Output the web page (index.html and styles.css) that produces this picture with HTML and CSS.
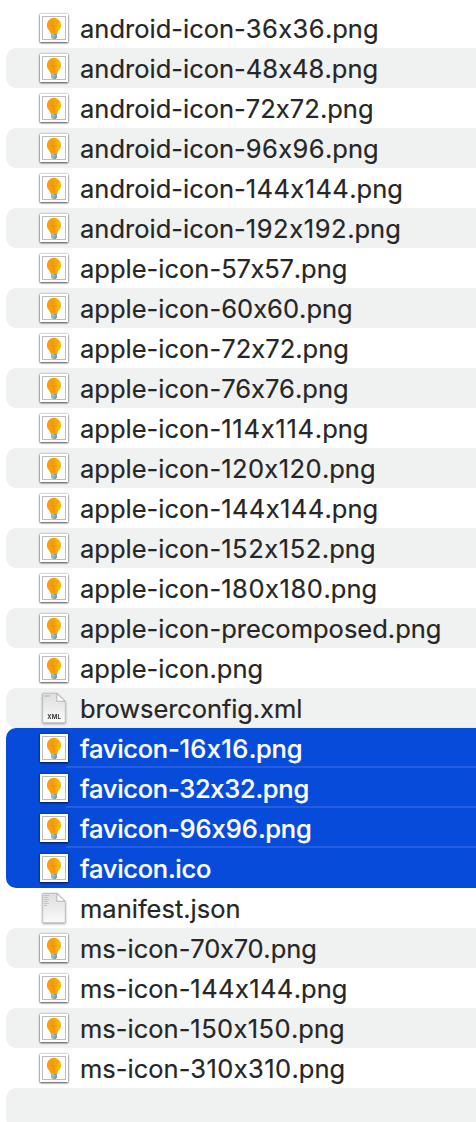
FILE: index.html
```
<!DOCTYPE html>
<html lang="en">
<head>
<meta charset="utf-8">
<title>Files</title>
<link rel="stylesheet" href="styles.css">
</head>
<body>
<svg class="defs" aria-hidden="true">
  <defs>
    <linearGradient id="glass" x1="0" x2="1" y1="0" y2="0">
      <stop offset="0" stop-color="#ff9d05"/><stop offset=".45" stop-color="#f99a0a"/><stop offset=".7" stop-color="#f5b20c"/><stop offset="1" stop-color="#f3bd12"/>
    </linearGradient>
    <linearGradient id="paper" x1="0" x2="0" y1="0" y2="1">
      <stop offset="0" stop-color="#dedede"/><stop offset="1" stop-color="#fafafa"/>
    </linearGradient>
    <symbol id="image" viewBox="0 0 28 28">
      <path fill="#fff" d="M0 0h28v28H0z"/>
      <path fill="none" stroke="#bcbcbc" d="M2.500 2.500h23v23h-23z"/>
      <path fill="url(#glass)" d="M14 3.800a7.200 7.200 0 0 0-7.200 7.200c0 3 1.500 4.500 2.700 6 .7 1 1 1.800 1.200 2.800h6.600c.2-1 .5-1.800 1.200-2.800 1.200-1.500 2.700-3 2.700-6A7.200 7.200 0 0 0 14 3.800z"/>
      <path fill="none" stroke="#dc8508" stroke-width=".8" opacity=".65" d="M10.500 11.500h7M14 11.500V19"/>
      <path fill="#a3b3b4" d="M11 19.600h6v3.600l-1.500 1.700h-3L11 23.200z"/>
      <path fill="#7d959c" d="M14.500 19.600H17v3.600l-1.500 1.700h-1z"/>
      <path stroke="#b9c4c5" stroke-width=".6" d="M11 21.600h6"/>
    </symbol>
    <symbol id="doc" viewBox="0 0 28 32">
      <path fill="url(#paper)" stroke="#b4b4b4" stroke-width=".7" d="M2.700 1.300H17L25.300 9.500V30.700H2.700z"/>
      <path fill="#fff" stroke="#a5a5a5" stroke-width=".8" d="M16.800 1.500v7.700h8.200z"/>
    </symbol>
  </defs>
</svg>
<ul class="files">
  <li class="row"><svg class="thumb"><use href="#image"/></svg><span class="name">android-icon-<span class="open">36x36</span>.png</span></li>
  <li class="row"><svg class="thumb"><use href="#image"/></svg><span class="name">android-icon-<span class="snug">48x48</span>.png</span></li>
  <li class="row"><svg class="thumb"><use href="#image"/></svg><span class="name">android-icon-<span class="snug">72x72</span>.png</span></li>
  <li class="row"><svg class="thumb"><use href="#image"/></svg><span class="name">android-icon-<span class="open">96x96</span>.png</span></li>
  <li class="row"><svg class="thumb"><use href="#image"/></svg><span class="name">android-icon-<span class="open">144x144</span>.png</span></li>
  <li class="row"><svg class="thumb"><use href="#image"/></svg><span class="name">android-icon-<span class="roomy">192x192</span>.png</span></li>
  <li class="row"><svg class="thumb"><use href="#image"/></svg><span class="name">apple-icon-<span class="close">57x57</span>.png</span></li>
  <li class="row"><svg class="thumb"><use href="#image"/></svg><span class="name">apple-icon-<span class="snug">60x60</span>.png</span></li>
  <li class="row"><svg class="thumb"><use href="#image"/></svg><span class="name">apple-icon-<span class="snug">72x72</span>.png</span></li>
  <li class="row"><svg class="thumb"><use href="#image"/></svg><span class="name">apple-icon-<span class="snug">76x76</span>.png</span></li>
  <li class="row"><svg class="thumb"><use href="#image"/></svg><span class="name">apple-icon-<span class="wide">114x114</span>.png</span></li>
  <li class="row"><svg class="thumb"><use href="#image"/></svg><span class="name">apple-icon-<span class="open">120x120</span>.png</span></li>
  <li class="row"><svg class="thumb"><use href="#image"/></svg><span class="name">apple-icon-<span class="open">144x144</span>.png</span></li>
  <li class="row"><svg class="thumb"><use href="#image"/></svg><span class="name">apple-icon-<span class="roomy">152x152</span>.png</span></li>
  <li class="row"><svg class="thumb"><use href="#image"/></svg><span class="name">apple-icon-<span class="roomy">180x180</span>.png</span></li>
  <li class="row"><svg class="thumb"><use href="#image"/></svg><span class="name">apple-icon-precomposed.png</span></li>
  <li class="row"><svg class="thumb"><use href="#image"/></svg><span class="name">apple-icon.png</span></li>
  <li class="row"><svg class="doc" viewBox="0 0 28 32"><use href="#doc"/><path stroke="#bbb" stroke-width="1.300" d="M4 4h6"/><text class="ext" x="14.200" y="26.700">XML</text></svg><span class="name tight">browserconfig.xml</span></li>
  <li class="row selected first"><svg class="thumb"><use href="#image"/></svg><span class="name">favicon-<span class="wide">16x16</span>.png</span></li>
  <li class="row selected"><svg class="thumb"><use href="#image"/></svg><span class="name">favicon-32x32.png</span></li>
  <li class="row selected"><svg class="thumb"><use href="#image"/></svg><span class="name">favicon-<span class="snug">96x96</span>.png</span></li>
  <li class="row selected last"><svg class="thumb"><use href="#image"/></svg><span class="name">favicon.ico</span></li>
  <li class="row"><svg class="doc" viewBox="0 0 28 32"><use href="#doc"/><path stroke="#b9b9b9" stroke-width=".8" d="M4 3.500h5M4 5.500h4M4 7.500h5M4 9.500h4M4 11.500h5M4 13.500h3"/></svg><span class="name">manifest.json</span></li>
  <li class="row"><svg class="thumb"><use href="#image"/></svg><span class="name">ms-icon-<span class="close">70x70</span>.png</span></li>
  <li class="row"><svg class="thumb"><use href="#image"/></svg><span class="name">ms-icon-<span class="open">144x144</span>.png</span></li>
  <li class="row"><svg class="thumb"><use href="#image"/></svg><span class="name">ms-icon-<span class="open">150x150</span>.png</span></li>
  <li class="row"><svg class="thumb"><use href="#image"/></svg><span class="name">ms-icon-<span class="open">310x310</span>.png</span></li>
  <li class="row"></li>
</ul>
</body>
</html>
```
FILE: styles.css
```
body {
  margin: 0;
  height: 1122px;
  overflow: hidden;
  background: #fff;
  font-family: Inter, "Liberation Sans", sans-serif;
}
.defs { display: block; width: 0; height: 0; }
.files {
  list-style: none;
  margin: 0;
  padding: 8px 0 0 6px;
}
.row {
  display: flex;
  align-items: center;
  box-sizing: border-box;
  height: 40px;
  padding-left: 34px;
  border-radius: 10px 0 0 10px;
  color: #262626;
}
.row:nth-child(even) { background: #f0f2f1; }
.thumb {
  width: 28px;
  height: 28px;
  flex: none;
  box-shadow: 0 1px 2px rgba(0, 0, 0, .65), 0 0 2px rgba(0, 0, 0, .35);
}
.doc {
  width: 28px;
  height: 32px;
  flex: none;
  filter: drop-shadow(0 1px 1px rgba(0, 0, 0, .35));
}
.ext {
  font: 600 6px Inter, sans-serif;
  letter-spacing: .2px;
  text-anchor: middle;
  fill: #222;
}
.name {
  margin-left: 12px;
  padding-top: 2px;
  font-size: 25.5px;
  line-height: 38px;
  font-feature-settings: "calt" 0;
  white-space: nowrap;
  -webkit-text-stroke: .2px currentColor;
}
.tight { letter-spacing: -.1px; }
.close { letter-spacing: -.25px; }
.snug { letter-spacing: .04px; }
.open { letter-spacing: .4px; }
.roomy { letter-spacing: .56px; }
.wide { letter-spacing: .76px; }
.row.selected {
  background: linear-gradient(#265ddf, #265ddf) 60px 38px / 100% 2px no-repeat #074bda;
  border-radius: 0;
  color: #fff;
}
.selected .name {
  font-weight: 500;
  letter-spacing: -.28px;
}
.selected .wide { letter-spacing: .35px; }
.selected .snug { letter-spacing: 0; }
.row.selected.first { border-top-left-radius: 10px; }
.row.selected.last {
  background: #074bda;
  border-bottom-left-radius: 10px;
}
```
